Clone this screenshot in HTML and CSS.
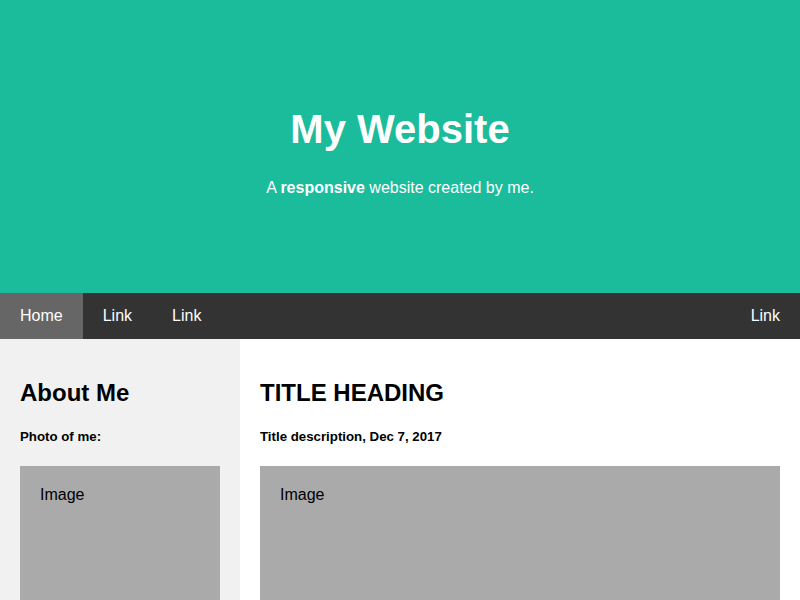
FILE: index.html
```html
<!DOCTYPE html>
<html lang="en">
<head>
<meta charset="utf-8">
<title>My Website</title>
<link rel="stylesheet" href="styles.css">
</head>
<body>
<div class="header">
  <h1>My Website</h1>
  <p>A <b>responsive</b> website created by me.</p>
</div>
<div class="navbar">
  <a href="#" class="active">Home</a>
  <a href="#">Link</a>
  <a href="#">Link</a>
  <a href="#" class="right">Link</a>
</div>
<div class="row">
  <div class="side">
    <h2>About Me</h2>
    <h5>Photo of me:</h5>
    <div class="fakeimg">Image</div>
  </div>
  <div class="main">
    <h2>TITLE HEADING</h2>
    <h5>Title description, Dec 7, 2017</h5>
    <div class="fakeimg">Image</div>
  </div>
</div>
</body>
</html>
```
FILE: styles.css
```css
* { box-sizing: border-box; }
body {
  font-family: "Liberation Sans", Arial, sans-serif;
  margin: 0;
}
.header {
  padding: 80px;
  text-align: center;
  background: #1abc9c;
  color: white;
}
.header h1 {
  font-size: 40px;
  margin: 0.67em 0;
}
.navbar {
  display: flex;
  background-color: #333;
}
.navbar a {
  display: block;
  color: white;
  text-align: center;
  padding: 14px 20px;
  text-decoration: none;
  line-height: normal;
}
.navbar a.active {
  background-color: #666;
}
.navbar a.right {
  margin-left: auto;
}
.row {
  display: flex;
  flex-wrap: wrap;
}
.side {
  flex: 30%;
  background-color: #f1f1f1;
  padding: 20px;
}
.main {
  flex: 70%;
  background-color: white;
  padding: 20px;
}
.fakeimg {
  background-color: #aaa;
  width: 100%;
  padding: 20px;
  height: 200px;
}
```
